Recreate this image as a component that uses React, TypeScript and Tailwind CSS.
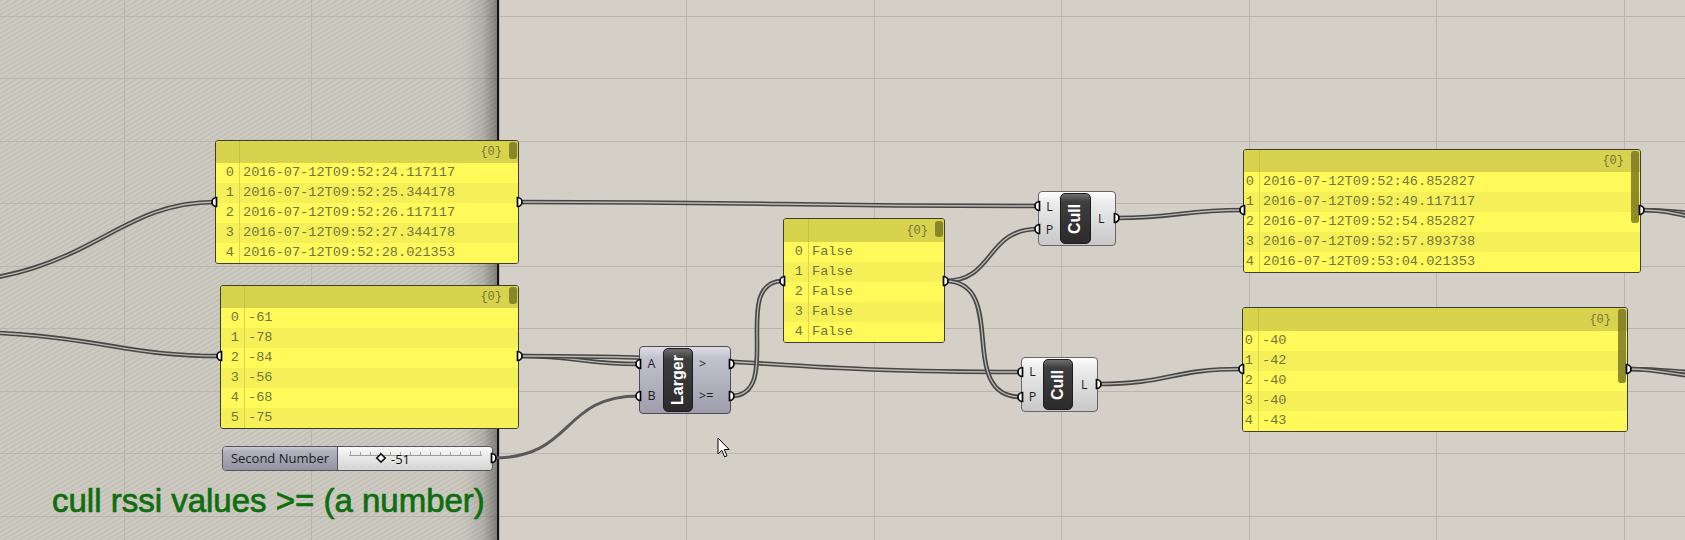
import React from "react";

const VX = [124, 311, 499, 686, 874, 1061, 1249, 1436, 1624];
const HY = [16, 78, 141, 203, 266, 328, 391, 453, 516];

function Background() {
  return (
    <svg className="absolute inset-0" width="1685" height="540" shapeRendering="crispEdges">
      <defs>
        <pattern id="hatch" width="4" height="4" patternUnits="userSpaceOnUse" patternTransform="rotate(-30)">
          <rect width="4" height="4" fill="#ceCBc3" />
          <rect width="4" height="1.5" fill="#c3c0b8" />
        </pattern>
        <linearGradient id="shade" x1="0" x2="1" y1="0" y2="0">
          <stop offset="0" stopColor="#000" stopOpacity="0" />
          <stop offset="0.6" stopColor="#000" stopOpacity="0.12" />
          <stop offset="1" stopColor="#000" stopOpacity="0.36" />
        </linearGradient>
      </defs>
      <rect x="0" y="0" width="498" height="540" fill="url(#hatch)" />
      {VX.map((x) => (
        <rect key={"v" + x} x={x} y="0" width="1" height="540" fill="#bab6ae" />
      ))}
      {HY.map((y) => (
        <rect key={"h" + y} x="0" y={y} width="1685" height="1" fill="#bab6ae" />
      ))}
      <rect x="462" y="0" width="35" height="540" fill="url(#shade)" />
      <rect x="497" y="0" width="2" height="540" fill="#121212" />
    </svg>
  );
}

const DOUBLE = [
  "M-80,284 C90,284 110,202 215,202",
  "M-80,331 C100,331 110,356 220,356",
  "M519,202 C780,202 780,206 1038,206",
  "M519,356 C580,356 580,364 639,364",
  "M519,356 C770,356 770,372 1021,372",
  "M731,396 C785,396 729,281 783,281",
  "M945,281 C995,281 985,229 1038,229",
  "M945,281 C1010,281 955,397 1021,397",
  "M1116,218 C1180,218 1180,210 1243,210",
  "M1098,384 C1170,384 1170,369 1242,369",
  "M1641,210 C1670,210 1680,213 1720,215",
  "M1641,210 C1670,210 1680,216 1720,222",
  "M1628,369 C1660,369 1680,372 1720,374",
  "M1628,369 C1660,369 1680,376 1720,380",
];

function Wires() {
  return (
    <svg className="absolute inset-0" width="1685" height="540">
      {DOUBLE.map((d, i) => (
        <g key={i} fill="none">
          <path d={d} stroke="#464646" strokeWidth={4.6} />
          <path d={d} stroke="#bcb9b1" strokeWidth={1.3} />
        </g>
      ))}
      <path d="M493,458 C575,458 560,396 639,396" fill="none" stroke="#595959" strokeWidth={3} />
    </svg>
  );
}

const INS: [number, number][] = [
  [215, 202],
  [220, 356],
  [639, 364],
  [639, 396],
  [783, 281],
  [1038, 206],
  [1038, 229],
  [1021, 372],
  [1021, 397],
  [1243, 210],
  [1242, 369],
];
const OUTS: [number, number][] = [
  [519, 202],
  [519, 356],
  [493, 458],
  [731, 364],
  [731, 396],
  [945, 281],
  [1116, 218],
  [1098, 384],
  [1641, 210],
  [1628, 369],
];

function Grips() {
  return (
    <svg className="pointer-events-none absolute inset-0" width="1685" height="540">
      {INS.map(([x, y], i) => (
        <path
          key={"i" + i}
          d={`M${x + 1.5},${y - 4.5} A4.5,4.5 0 0 0 ${x + 1.5},${y + 4.5} Z`}
          fill="#fff"
          stroke="#000"
          strokeWidth={1.7}
        />
      ))}
      {OUTS.map(([x, y], i) => (
        <path
          key={"o" + i}
          d={`M${x - 1.5},${y - 4.5} A4.5,4.5 0 0 1 ${x - 1.5},${y + 4.5} Z`}
          fill="#fff"
          stroke="#000"
          strokeWidth={1.7}
        />
      ))}
    </svg>
  );
}

type PanelProps = { pos: string; hdr: string; idx: string; thumb: string; rows: string[] };

function Panel({ pos, hdr, idx, thumb, rows }: PanelProps) {
  return (
    <div
      className={`absolute ${pos} overflow-hidden rounded-[3px] border border-[#3d3d32] font-['Liberation_Mono',monospace] text-[#74743f]`}
    >
      <div className={`flex ${hdr} bg-[#d8d34d]`}>
        <div className={`${idx} shrink-0 border-r border-[#c6c047]`} />
        <div className="flex flex-1 items-center justify-end pr-[16px] text-[12px]">{"{0}"}</div>
      </div>
      {rows.map((r, i) => (
        <div key={i} className={`flex h-[20px] ${i % 2 === 0 ? "bg-[#fffa5a]" : "bg-[#f5f057]"}`}>
          <div className={`${idx} flex shrink-0 items-center justify-end border-r border-[#d9d34f] pr-[5px] text-[13.6px]`}>
            {i}
          </div>
          <div className="flex items-center whitespace-nowrap pl-[3px] text-[13.6px]">{r}</div>
        </div>
      ))}
      <div className={`absolute ${thumb} rounded-[3px] bg-[#7b7824]/85`} />
    </div>
  );
}

type CompProps = {
  pos: string;
  skin: string;
  name: string;
  ins: string[];
  outs: string[];
  left: string;
  dark: string;
  gap: string;
  pad: string;
};

function Comp({ pos, skin, name, ins, outs, left, dark, gap, pad }: CompProps) {
  return (
    <div className={`absolute ${pos} flex rounded-[4px] border ${skin} font-['Open_Sans',sans-serif] text-[12.5px] text-[#1e1e1e]`}>
      <div className={`${left} flex shrink-0 flex-col items-center justify-center ${gap}`}>
        {ins.map((l) => (
          <span key={l} className="h-[16px] leading-[16px]">
            {l}
          </span>
        ))}
      </div>
      <div
        className={`${dark} my-[1px] flex shrink-0 items-center justify-center overflow-hidden rounded-[5px] border border-[#1c1c1c] bg-[linear-gradient(to_bottom,#6e6e6e_0%,#3e3e3e_16%,#2b2b2b_100%)]`}
      >
        <span className="-rotate-90 whitespace-nowrap font-['Liberation_Sans',sans-serif] text-[16px] font-bold text-white">
          {name}
        </span>
      </div>
      <div className={`flex flex-1 flex-col justify-center ${gap} ${pad}`}>
        {outs.map((l) => (
          <span key={l} className="h-[16px] leading-[16px]">
            {l}
          </span>
        ))}
      </div>
    </div>
  );
}

function Slider() {
  const ticks = [12, 22, 32, 42, 52, 62, 72, 82, 92, 102, 112, 122, 132, 142];
  return (
    <div className="absolute left-[222px] top-[446px] flex h-[25px] w-[271px] overflow-hidden rounded-[4px] border border-[#55555f] font-['Open_Sans',sans-serif]">
      <div className="flex w-[115px] shrink-0 items-center justify-center border-r border-[#55555f] bg-[linear-gradient(to_bottom,#c9c9d3_0%,#b0b0bd_20%,#9393a3_100%)] text-[13px] text-[#1c1c1c]">
        Second Number
      </div>
      <div className="relative flex flex-1 items-center bg-[linear-gradient(to_bottom,#fafafa_0%,#eeeeee_30%,#d4d4d4_100%)] pl-[53px] text-[13px] text-[#111]">
        <svg className="absolute inset-0" width="156" height="23" shapeRendering="crispEdges">
          <rect x="11" y="8" width="133" height="1" fill="#9a9a9a" />
          {ticks.map((t) => (
            <rect key={t} x={t} y={t === 12 || t === 142 ? 4 : 5} width="1" height={t === 12 || t === 142 ? 5 : 3} fill="#a5a5a5" />
          ))}
          <rect x="40" y="8" width="6" height="6" fill="#fff" stroke="#111" strokeWidth="1.6" transform="rotate(45 43 11)" shapeRendering="auto" />
        </svg>
        <span className="relative leading-[16px]">-51</span>
      </div>
    </div>
  );
}

function Cursor() {
  return (
    <svg className="absolute left-[717px] top-[437px]" width="14" height="22" viewBox="0 0 14 22">
      <path d="M1,1 L1,17 L4.8,13.4 L7.6,19.8 L10,18.8 L7.3,12.5 L12.2,12.5 Z" fill="#fff" stroke="#000" strokeWidth="1" />
    </svg>
  );
}

const CULL_SKIN =
  "border-[#666666] bg-[linear-gradient(to_bottom,#fdfdfd_0%,#ededed_18%,#c8c8c8_100%)]";
const LARGER_SKIN =
  "border-[#4c4c58] bg-[linear-gradient(to_bottom,#dedee6_0%,#c3c3ce_16%,#9d9dac_100%)]";

export default function App() {
  return (
    <div className="relative h-[540px] w-[1685px] overflow-hidden bg-[#d4d0c8]">
      <Background />
      <Wires />

      <Panel
        pos="left-[215px] top-[140px] w-[304px]"
        hdr="h-[22px]"
        idx="w-[24px]"
        thumb="right-[1px] top-[1px] w-[8px] h-[17px]"
        rows={[
          "2016-07-12T09:52:24.117117",
          "2016-07-12T09:52:25.344178",
          "2016-07-12T09:52:26.117117",
          "2016-07-12T09:52:27.344178",
          "2016-07-12T09:52:28.021353",
        ]}
      />
      <Panel
        pos="left-[220px] top-[285px] w-[299px]"
        hdr="h-[22px]"
        idx="w-[24px]"
        thumb="right-[1px] top-[1px] w-[8px] h-[17px]"
        rows={["-61", "-78", "-84", "-56", "-68", "-75"]}
      />
      <Panel
        pos="left-[783px] top-[218px] w-[162px]"
        hdr="h-[23px]"
        idx="w-[25px]"
        thumb="right-[1px] top-[2px] w-[8px] h-[16px]"
        rows={["False", "False", "False", "False", "False"]}
      />
      <Panel
        pos="left-[1243px] top-[149px] w-[398px]"
        hdr="h-[22px]"
        idx="w-[16px]"
        thumb="right-[1px] top-[1px] w-[8px] h-[72px]"
        rows={[
          "2016-07-12T09:52:46.852827",
          "2016-07-12T09:52:49.117117",
          "2016-07-12T09:52:54.852827",
          "2016-07-12T09:52:57.893738",
          "2016-07-12T09:53:04.021353",
        ]}
      />
      <Panel
        pos="left-[1242px] top-[307px] w-[386px]"
        hdr="h-[23px]"
        idx="w-[16px]"
        thumb="right-[1px] top-[1px] w-[8px] h-[74px]"
        rows={["-40", "-42", "-40", "-40", "-43"]}
      />

      <Slider />

      <Comp
        pos="left-[639px] top-[346px] w-[92px] h-[68px]"
        skin={LARGER_SKIN}
        name="Larger"
        ins={["A", "B"]}
        outs={[">", ">="]}
        left="w-[23px]"
        dark="w-[30px]"
        gap="gap-[16px]"
        pad="pl-[6px]"
      />
      <Comp
        pos="left-[1038px] top-[191px] w-[78px] h-[55px]"
        skin={CULL_SKIN}
        name="Cull"
        ins={["L", "P"]}
        outs={["L"]}
        left="w-[21px]"
        dark="w-[31px]"
        gap="gap-[7px]"
        pad="pl-[7px]"
      />
      <Comp
        pos="left-[1021px] top-[357px] w-[77px] h-[55px]"
        skin={CULL_SKIN}
        name="Cull"
        ins={["L", "P"]}
        outs={["L"]}
        left="w-[21px]"
        dark="w-[30px]"
        gap="gap-[9px]"
        pad="pl-[8px]"
      />

      <Grips />

      <div className="absolute left-[52px] top-[484px] whitespace-nowrap font-['Liberation_Sans',sans-serif] text-[33px] leading-[33px] text-[#0e6e0e] [-webkit-text-stroke:0.7px_#0e6e0e]">
        cull rssi values &gt;= (a number)
      </div>

      <Cursor />
    </div>
  );
}
